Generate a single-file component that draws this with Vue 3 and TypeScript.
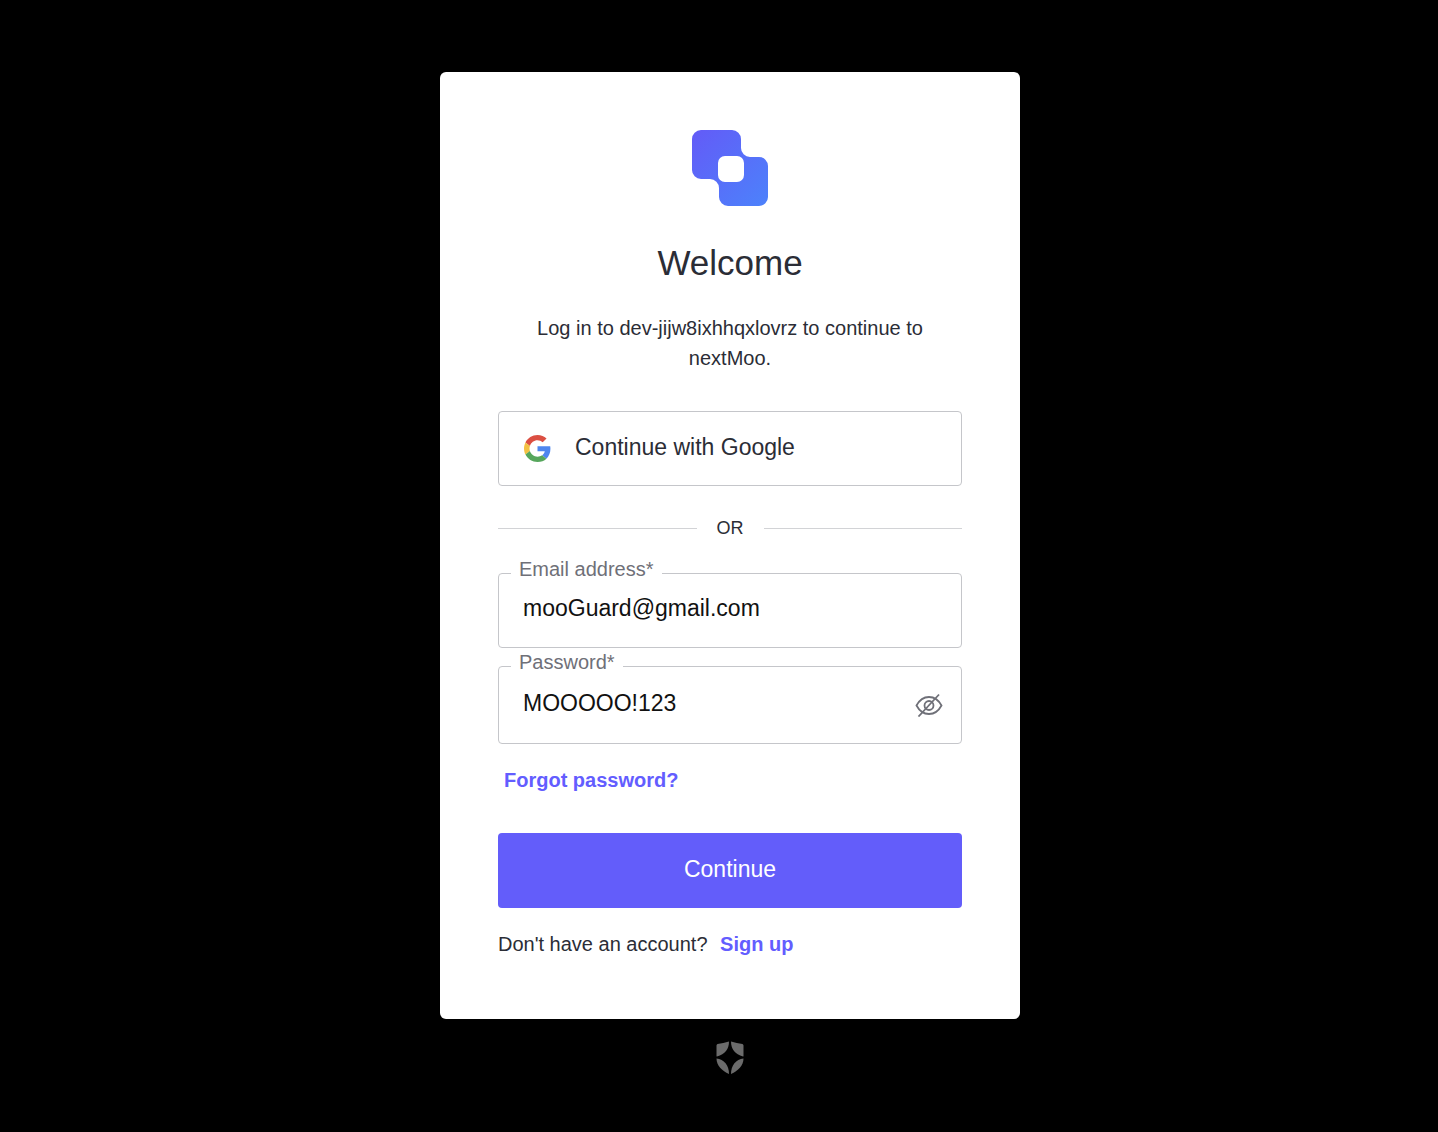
<script setup lang="ts">
import { ref } from 'vue'

const email = ref('mooGuard@gmail.com')
const password = ref('MOOOOO!123')
const passwordVisible = ref(true)
</script>

<template>
  <main class="page">
    <section class="card">
      <svg class="logo" viewBox="0 0 76 76" aria-hidden="true">
        <defs>
          <linearGradient id="logo-fill" x1="0" y1="0" x2="1" y2="1">
            <stop offset="0" stop-color="#635bf7" />
            <stop offset="1" stop-color="#4c82fb" />
          </linearGradient>
        </defs>
        <path
          fill="url(#logo-fill)"
          fill-rule="evenodd"
          d="M9 0H40a9 9 0 0 1 9 9V18a9 9 0 0 0 9 9H67a9 9 0 0 1 9 9V67a9 9 0 0 1-9 9H36a9 9 0 0 1-9-9V58a9 9 0 0 0-9-9H9a9 9 0 0 1-9-9V9a9 9 0 0 1 9-9ZM33 26a7 7 0 0 0-7 7V45a7 7 0 0 0 7 7H45a7 7 0 0 0 7-7V33a7 7 0 0 0-7-7Z"
        />
      </svg>
      <h1 class="title">Welcome</h1>
      <p class="intro">Log in to dev-jijw8ixhhqxlovrz to continue to nextMoo.</p>

      <button class="control google" type="button">
        <svg class="google-icon" viewBox="0 0 48 48" aria-hidden="true">
          <path fill="#db4f42" d="M24 9.5c3.54 0 6.71 1.22 9.21 3.6l6.85-6.85C35.9 2.38 30.47 0 24 0 14.62 0 6.51 5.38 2.56 13.22l7.98 6.19C12.43 13.72 17.74 9.5 24 9.5z" />
          <path fill="#4f86ee" d="M46.98 24.55c0-1.57-.15-3.09-.38-4.55H24v9.02h12.94c-.58 2.96-2.26 5.48-4.78 7.18l7.73 6c4.51-4.18 7.09-10.36 7.09-17.65z" />
          <path fill="#f3c143" d="M10.53 28.59c-.48-1.45-.76-2.99-.76-4.59s.27-3.14.76-4.59l-7.98-6.19C.92 16.46 0 20.12 0 24c0 3.88.92 7.54 2.56 10.78l7.97-6.19z" />
          <path fill="#56a65c" d="M24 48c6.48 0 11.93-2.13 15.89-5.81l-7.73-6c-2.15 1.45-4.92 2.3-8.16 2.3-6.26 0-11.57-4.22-13.47-9.91l-7.98 6.19C6.51 42.62 14.62 48 24 48z" />
        </svg>
        <span>Continue with Google</span>
      </button>

      <div class="divider"><span>OR</span></div>

      <form @submit.prevent>
        <div class="field">
          <label for="email">Email address*</label>
          <input id="email" v-model="email" class="control" type="text" autocomplete="email" />
        </div>
        <div class="field">
          <label for="password">Password*</label>
          <input
            id="password"
            v-model="password"
            class="control secret"
            :type="passwordVisible ? 'text' : 'password'"
            autocomplete="current-password"
          />
          <button
            class="toggle"
            type="button"
            aria-label="Toggle password visibility"
            @click="passwordVisible = !passwordVisible"
          >
            <svg viewBox="0 0 28 24" fill="none" stroke="#6f7078" stroke-width="1.8" aria-hidden="true">
              <path d="M1.500 12.500C5 6 9 4 14 4S23 6 26.500 12.500C23 19 19 21 14 21S5 19 1.500 12.500Z" />
              <circle cx="14" cy="12.500" r="4.500" />
              <path d="M3.500 23.500 24 1.500" />
            </svg>
          </button>
        </div>
        <a class="link forgot" href="#">Forgot password?</a>
        <button class="submit" type="submit">Continue</button>
      </form>

      <p class="signup">Don't have an account? <a class="link" href="#">Sign up</a></p>
    </section>

    <svg class="shield" viewBox="0 0 28 34" fill="#6b6b6b" aria-hidden="true">
      <path d="M13 0.500C13 8 9 13 1 15.500Q0.500 15.500 0.500 15V4.500Q0.500 3.500 1.500 3C5.500 2.500 9 1.500 13 0.500Z" />
      <path d="M15 0.500C15 8 19 13 27 15.500Q27.500 15.500 27.500 15V4.500Q27.500 3.500 26.500 3C22.500 2.500 19 1.500 15 0.500Z" />
      <path d="M0.500 17.500C8 18.500 13 24 13 33C6 30 0.500 24.500 0.500 17.500Z" />
      <path d="M27.500 17.500C20 18.500 15 24 15 33C22 30 27.500 24.500 27.500 17.500Z" />
    </svg>
  </main>
</template>

<style>
body {
  margin: 0;
  background: #000;
}
</style>

<style scoped>
* {
  box-sizing: border-box;
}

.page {
  display: flex;
  flex-direction: column;
  align-items: center;
  min-height: 100vh;
  padding: 72px 0 56px 22px;
  font-family: 'Liberation Sans', Arial, sans-serif;
  font-size: 20px;
  line-height: 30px;
  color: #2b2d36;
}

.card {
  display: flex;
  flex-direction: column;
  width: 100%;
  max-width: 580px;
  padding: 58px 58px 60px;
  border-radius: 6px;
  background: #fff;
}

.logo {
  align-self: center;
  width: 76px;
  height: 76px;
}

.title {
  margin: 36px 0 29px;
  font-size: 35px;
  line-height: 42px;
  font-weight: 400;
  text-align: center;
}

.intro {
  margin: 0 36px 38px;
  text-align: center;
}

button,
input {
  font: inherit;
}

.control {
  display: block;
  width: 100%;
  height: 75px;
  padding: 0 24px 4px;
  border: 1px solid #c5c6ca;
  border-radius: 4px;
  background: #fff;
  font-size: 23px;
  color: #111;
}

.google {
  display: flex;
  align-items: center;
  gap: 24px;
  padding-left: 25px;
  color: #2b2d36;
}

.google-icon {
  width: 27px;
  height: 27px;
  margin-top: 4px;
}

.divider {
  display: flex;
  align-items: center;
  gap: 20px;
  margin: 27px 0 30px;
  font-size: 18px;
}

.divider::before,
.divider::after {
  content: '';
  flex: 1;
  border-top: 1px solid #d2d3d6;
}

.field {
  position: relative;
  margin-bottom: 18px;
}

.field label {
  position: absolute;
  top: -17px;
  left: 13px;
  padding: 0 8px;
  line-height: 26px;
  background: #fff;
  color: #6f7078;
}

.control.secret {
  height: 78px;
  padding-right: 64px;
}

.toggle {
  position: absolute;
  top: 0;
  right: 11px;
  bottom: 0;
  display: flex;
  align-items: center;
  padding: 0 8px;
  border: 0;
  background: none;
}

.toggle svg {
  width: 28px;
  height: 24px;
}

.link {
  color: #635dff;
  font-weight: 700;
  text-decoration: none;
}

.forgot {
  display: table;
  margin: 21px 0 0 6px;
}

.submit {
  display: block;
  width: 100%;
  height: 75px;
  margin: 38px 0 21px;
  padding: 0 0 4px;
  border: 0;
  border-radius: 4px;
  background: #635dfa;
  color: #fff;
  font-size: 23px;
}

.signup {
  margin: 0;
}

.signup .link {
  margin-left: 7px;
}

.shield {
  width: 28px;
  height: 34px;
  margin-top: 22px;
}
</style>
